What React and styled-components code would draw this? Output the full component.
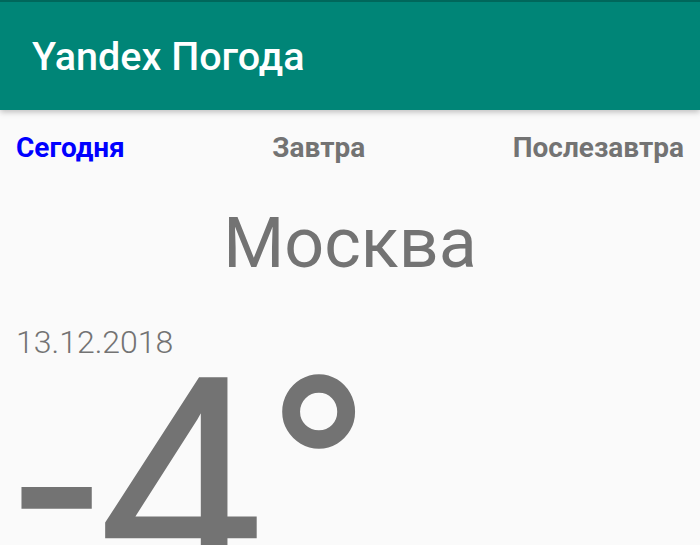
import React from "react";
import styled, { createGlobalStyle } from "styled-components";

const Global = createGlobalStyle`
  html, body { margin: 0; padding: 0; background: #fafafa; }
  body { font-family: Roboto, "Noto Sans", sans-serif; overflow: hidden; }
  * { box-sizing: border-box; }
`;

const Page = styled.div`
  width: 700px;
  height: 545px;
  background: #fafafa;
  overflow: hidden;
  display: flex;
  flex-direction: column;
`;

const AppBar = styled.header`
  height: 110px;
  flex: none;
  background: #008577;
  border-top: 2px solid #00675b;
  box-shadow: 0 2px 6px rgba(0, 0, 0, 0.25);
  display: flex;
  align-items: center;
  padding-left: 32px;
  position: relative;
  z-index: 1;
`;

const Title = styled.h1`
  margin: 0;
  color: #fff;
  font-size: 39.5px;
  font-weight: 500;
`;

const Tabs = styled.nav`
  display: flex;
  justify-content: space-between;
  padding: 0 16px;
  margin-top: 21px;
`;

const Tab = styled.span`
  font-size: 28px;
  font-weight: 700;
  color: ${(p) => (p.$active ? "#0000ff" : "#737373")};
`;

const City = styled.div`
  margin-top: 38px;
  text-align: center;
  font-size: 70px;
  color: #737373;
`;

const DateText = styled.div`
  margin-top: 39px;
  padding-left: 16px;
  font-size: 32px;
  font-weight: 300;
  color: #737373;
`;

const Temp = styled.div`
  margin-top: -22px;
  padding-left: 16px;
  font-size: 295px;
  line-height: 1;
  color: #737373;
  white-space: nowrap;
`;

export default function App() {
  return (
    <Page>
      <Global />
      <AppBar>
        <Title>Yandex Погода</Title>
      </AppBar>
      <Tabs>
        <Tab $active>Сегодня</Tab>
        <Tab>Завтра</Tab>
        <Tab>Послезавтра</Tab>
      </Tabs>
      <City>Москва</City>
      <DateText>13.12.2018</DateText>
      <Temp>-4°</Temp>
    </Page>
  );
}
